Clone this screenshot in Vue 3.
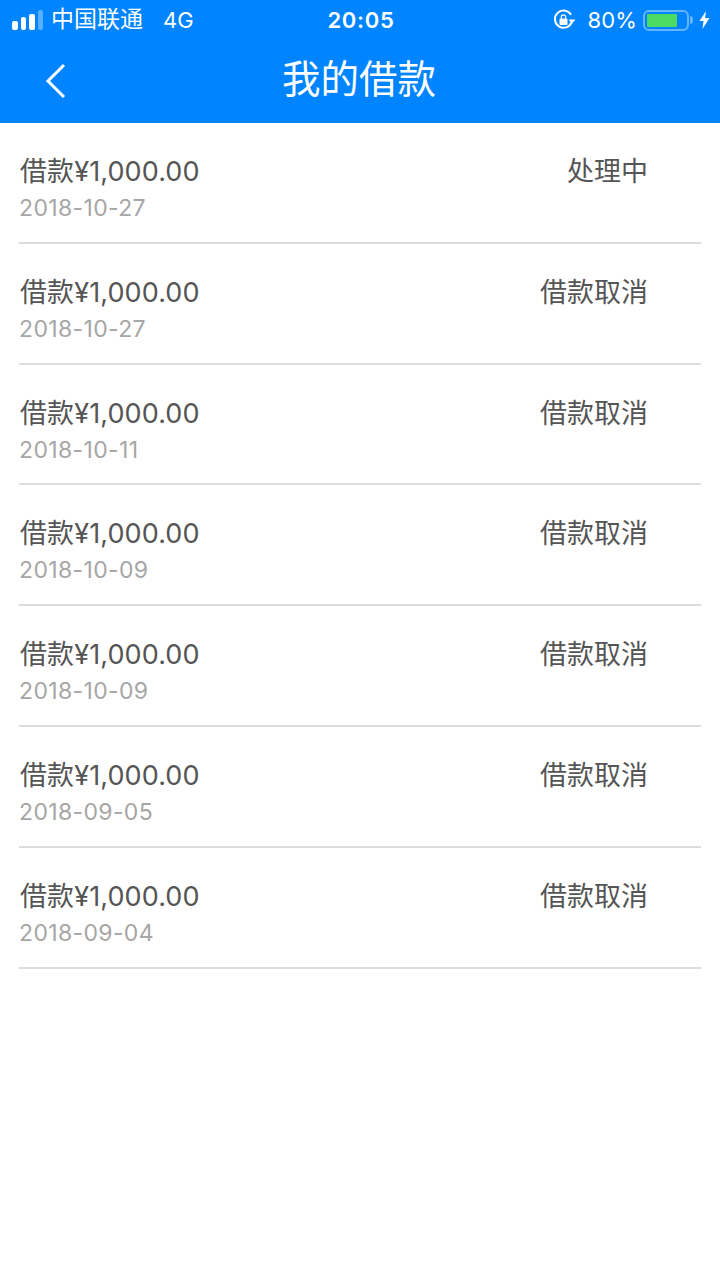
<template>
  <div class="page">
    <header class="top">
      <div class="status">
        <div class="status-left">
          <div class="signal">
            <i class="bar b1"></i><i class="bar b2"></i><i class="bar b3"></i><i class="bar b4"></i>
          </div>
          <span class="carrier">中国联通</span>
          <span class="net">4G</span>
        </div>
        <span class="clock">20:05</span>
        <div class="status-right">
          <svg class="lock" width="24" height="24" viewBox="0 0 24 24" fill="none">
            <path d="M19.5 14.5A8.6 8.6 0 1 1 18.6 6.2" stroke="#fff" stroke-width="2" stroke-linecap="round" />
            <path d="M16.5 11.5h7l-3.5 4z" fill="#fff" />
            <rect x="7.5" y="10.5" width="8" height="6.5" rx="1" fill="#fff" />
            <path d="M9.3 10.5V9a2.2 2.2 0 0 1 4.4 0v1.5" stroke="#fff" stroke-width="1.3" />
          </svg>
          <span class="percent">80%</span>
          <div class="battery"><div class="level" :style="{ width: '80%' }"></div></div>
          <i class="nub"></i>
          <svg class="bolt" width="11" height="18" viewBox="0 0 11 18">
            <path d="M7 0 L0.5 10 H4.5 L3.5 18 L10.5 7 H6 Z" fill="#fff" />
          </svg>
        </div>
      </div>
      <div class="nav">
        <svg class="back" width="24" height="38" viewBox="0 0 24 38" fill="none">
          <path d="M20 3 L4 19 L20 35" stroke="#fff" stroke-width="3" />
        </svg>
        <h1 class="title">我的借款</h1>
      </div>
    </header>
    <ul class="list">
      <li v-for="(item, i) in loans" :key="i" class="row">
        <div class="info">
          <div class="amount">借款¥1,000.00</div>
          <div class="date">{{ item.date }}</div>
        </div>
        <div class="state">{{ item.state }}</div>
      </li>
    </ul>
  </div>
</template>

<script setup>
const loans = [
  { date: '2018-10-27', state: '处理中' },
  { date: '2018-10-27', state: '借款取消' },
  { date: '2018-10-11', state: '借款取消' },
  { date: '2018-10-09', state: '借款取消' },
  { date: '2018-10-09', state: '借款取消' },
  { date: '2018-09-05', state: '借款取消' },
  { date: '2018-09-04', state: '借款取消' }
]
</script>

<style>
html,
body {
  margin: 0;
  background: #fff;
}
</style>

<style scoped>
.page {
  width: 720px;
  height: 1280px;
  overflow: hidden;
  background: #fff;
  font-family: Inter, "Noto Sans CJK SC", sans-serif;
}

.top {
  height: 123px;
  background: #0084ff;
  color: #fff;
}

.status {
  height: 40px;
  display: grid;
  grid-template-columns: 1fr auto 1fr;
  align-items: center;
  font-size: 22px;
  line-height: 24px;
}

.status-left {
  display: flex;
  align-items: center;
  padding-left: 12px;
}

.signal {
  display: flex;
  align-items: flex-end;
  gap: 3px;
  height: 20px;
  margin-right: 8px;
}

.bar {
  width: 5.5px;
  background: #fff;
  border-radius: 2px;
}

.b1 { height: 9px; }
.b2 { height: 13px; }
.b3 { height: 16px; }
.b4 { height: 20px; background: rgba(255, 255, 255, 0.35); }

.carrier {
  font-size: 23px;
  margin-top: -3px;
}

.net {
  margin-left: 20px;
}

.clock {
  font-weight: 600;
  font-size: 22px;
  letter-spacing: 0.7px;
  margin-left: 2px;
}

.status-right {
  display: flex;
  align-items: center;
  justify-content: flex-end;
  padding-right: 10px;
}

.lock {
  margin-right: 12px;
  margin-left: 2px;
}

.percent {
  margin-right: 6px;
  letter-spacing: 0.1px;
}

.battery {
  width: 46px;
  height: 21px;
  box-sizing: border-box;
  padding: 2px;
  border: 2px solid rgba(255, 255, 255, 0.4);
  border-radius: 6px;
}

.level {
  height: 100%;
  background: #4cd964;
  border-radius: 1px;
}

.nub {
  width: 3px;
  height: 8px;
  margin-left: 1px;
  margin-right: 6px;
  background: rgba(255, 255, 255, 0.4);
  border-radius: 0 3px 3px 0;
}

.nav {
  position: relative;
  height: 83px;
  display: flex;
  align-items: center;
  justify-content: center;
}

.back {
  position: absolute;
  left: 44px;
  top: 22px;
}

.title {
  margin: 0 2px 0 0;
  font-size: 38.5px;
  font-weight: 400;
  line-height: 1;
  position: relative;
  top: -2px;
}

.list {
  margin: 0;
  padding: 0 19px;
  list-style: none;
}

.row {
  height: 120.83px;
  box-sizing: border-box;
  display: flex;
  justify-content: space-between;
  padding: 31px 53px 0 1px;
  border-bottom: 2px solid #dcdcdc;
}

.amount {
  font-size: 27px;
  line-height: 36px;
  letter-spacing: 0.1px;
  color: #555;
}

.date {
  margin: 3px 0 0 -1px;
  font-size: 23px;
  line-height: 30px;
  letter-spacing: 0.35px;
  color: #a6a6a6;
}

.state {
  font-size: 27px;
  line-height: 36px;
  color: #555;
}
</style>
